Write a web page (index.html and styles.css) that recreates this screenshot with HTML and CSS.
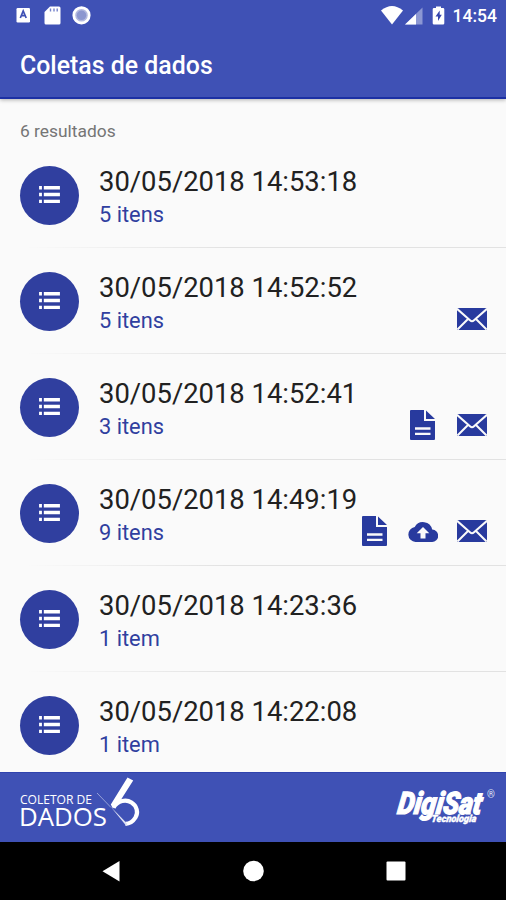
FILE: index.html
```html
<!DOCTYPE html>
<html lang="pt-BR">
<head>
<meta charset="utf-8">
<title>Coletas de dados</title>
<link rel="stylesheet" href="styles.css">
</head>
<body>
<svg class="defs" aria-hidden="true">
  <symbol id="list" viewBox="0 0 22 19"><path d="M0 0h3v3.600H0zM5 0h17v3.600H5zM0 7.200h3v3.600H0zM5 7.200h17v3.600H5zM0 14.400h3V18H0zM5 14.400h17V18H5z"/></symbol>
  <symbol id="mail" viewBox="0 0 30 22"><rect width="30" height="22" rx="1.500"/><path class="cut" d="M0 .8L13 12.300q2 1.800 4 0L30 .8M.5 21.500L11 11M29.500 21.500L19 11"/></symbol>
  <symbol id="file" viewBox="0 0 25 30"><path d="M1 0h13v11h11v18q0 1-1 1H1q-1 0-1-1V1q0-1 1-1zM16 0.500L25 9h-9z"/><path class="cut thick" d="M5 18.500h15.500M5 23.800h15.500"/></symbol>
  <symbol id="cloud" viewBox="0 0 30 20"><path fill-rule="evenodd" d="M24.200 7.600A9.400 9.400 0 0 0 6.700 5.100 7.500 7.500 0 0 0 7.500 20H23.800a6.200 6.200 0 0 0 .4-12.400zM12.500 16.500v-5.300H8.700L15 5l6.300 6.200h-3.800v5.300z"/></symbol>
</svg>
<header class="appbar">
  <div class="status">
    <svg class="status-left" viewBox="0 0 80 20">
      <rect x=".5" y="2" width="13.500" height="14.500" rx="1.200" fill="#fff"/>
      <path d="M4.300 12L7.200 5 10.200 12M5.500 9.600h3.500" fill="none" stroke="#3f51b5" stroke-width="1.700"/>
      <path d="M34 .5h9q1.500 0 1.500 1.500v15q0 1.500-1.500 1.500H30q-1.500 0-1.500-1.500V6z" fill="#fff"/>
      <path d="M34.500 2.500v3M38 2.500v3M41.200 2.500v3" stroke="#7582cb" stroke-width="1.400"/>
      <circle cx="65.500" cy="9.300" r="7.700" fill="#b3badf" stroke="#fff" stroke-width="2.800"/>
      <circle cx="65.500" cy="9.300" r="4.800" fill="#8c97d0"/>
    </svg>
    <div class="status-right">
      <svg class="signals" viewBox="0 0 68 20">
        <path d="M0 4.500Q11-4.500 22 4.500L11 18.500z" fill="#fff"/>
        <path d="M41.500 1.500v17H24z" fill="#8c97d3"/>
        <path d="M35 8v10.500H24z" fill="#fff"/>
        <path d="M55 .5h5v1.500h2q1.300 0 1.300 1.300v14q0 1.300-1.300 1.300h-9q-1.300 0-1.300-1.300v-14q0-1.300 1.300-1.300h2z" fill="#fff"/>
        <path d="M58.700 4.500L54.500 10.500H57v4.500L60.800 8.800h-2.100z" fill="#3545ad"/>
      </svg>
      <span class="clock">14:54</span>
    </div>
  </div>
  <h1>Coletas de dados</h1>
</header>
<main>
  <p class="count">6 resultados</p>
  <ul>
    <li><span class="badge"><svg><use href="#list"/></svg></span><div class="info"><p class="date">30/05/2018 14:53:18</p><p class="items">5 itens</p></div></li>
    <li><span class="badge"><svg><use href="#list"/></svg></span><div class="info"><p class="date">30/05/2018 14:52:52</p><p class="items">5 itens</p></div><div class="actions"><svg class="mail"><use href="#mail"/></svg></div></li>
    <li><span class="badge"><svg><use href="#list"/></svg></span><div class="info"><p class="date">30/05/2018 14:52:41</p><p class="items">3 itens</p></div><div class="actions"><svg class="file"><use href="#file"/></svg><svg class="mail"><use href="#mail"/></svg></div></li>
    <li><span class="badge"><svg><use href="#list"/></svg></span><div class="info"><p class="date">30/05/2018 14:49:19</p><p class="items">9 itens</p></div><div class="actions"><svg class="file"><use href="#file"/></svg><svg class="cloud"><use href="#cloud"/></svg><svg class="mail"><use href="#mail"/></svg></div></li>
    <li><span class="badge"><svg><use href="#list"/></svg></span><div class="info"><p class="date">30/05/2018 14:23:36</p><p class="items">1 item</p></div></li>
    <li><span class="badge"><svg><use href="#list"/></svg></span><div class="info"><p class="date">30/05/2018 14:22:08</p><p class="items">1 item</p></div></li>
  </ul>
</main>
<footer>
  <svg class="coletor" viewBox="0 0 122 50">
    <text x="0" y="25" font-size="12.200" textLength="72" lengthAdjust="spacingAndGlyphs">COLETOR DE</text>
    <text x="-1" y="46.800" font-size="25.500" textLength="88" lengthAdjust="spacingAndGlyphs">DADOS</text>
    <path d="M113.200 1.500L107.500-1.500 90.800 25.500 93 29.500Q97 24.500 99.500 23z" fill="#fff"/>
    <path d="M93.500 28.500C98 21.500 106 20 111.500 23.500 117 27 118.500 33.500 115.500 38.500 113 42.500 109.500 44.800 105.500 44.800" fill="none" stroke="#fff" stroke-width="4.200"/>
    <path d="M77 14L91 28.500" stroke="#9fa8da" stroke-width=".9"/>
    <path d="M90.500 27.500L106 46.500l1.500-1.500z" fill="#dfe2f3"/>
  </svg>
  <svg class="digisat" viewBox="0 0 102 40">
    <g transform="skewX(-8)">
      <text class="brand" x="6.500" y="27" textLength="84" lengthAdjust="spacingAndGlyphs">DigiSat</text>
      <text class="tech" x="42" y="35.500" textLength="45" lengthAdjust="spacingAndGlyphs">Tecnologia</text>
    </g>
    <text class="reg" x="93" y="11">®</text>
  </svg>
</footer>
<nav>
  <svg viewBox="0 0 506 58">
    <path d="M119.500 19v20.500L102.500 29.200z"/>
    <circle cx="253.500" cy="29" r="10.300"/>
    <rect x="386.500" y="19.500" width="19" height="19" rx="1"/>
  </svg>
</nav>
</body>
</html>
```

FILE: styles.css
```css
* { box-sizing: border-box; margin: 0; padding: 0; }
body {
  height: 900px;
  display: flex;
  flex-direction: column;
  overflow: hidden;
  background: #fafafa;
  font-family: Roboto, sans-serif;
}
svg { display: block; flex: none; }
.defs { display: none; }

.appbar {
  flex: none;
  height: 99px;
  background: #3f51b5;
  border-bottom: 2px solid #1c30a4;
  box-shadow: 0 1px 4px rgba(0, 0, 0, .3);
  color: #fff;
}
.status {
  height: 32px;
  display: flex;
  justify-content: space-between;
  padding: 6px 9px 0 16px;
}
.status-left { width: 80px; height: 20px; }
.status-right { display: flex; gap: 4px; }
.signals { width: 68px; height: 20px; }
.clock { font-size: 17.5px; font-weight: 500; line-height: 20px; }
h1 {
  padding-left: 20px;
  font-size: 24.9px;
  font-weight: 500;
  line-height: 32px;
  margin-top: 18px;
}

main { flex: 1; min-height: 0; overflow: hidden; }
.count {
  height: 43px;
  padding: 22px 0 0 20px;
  font-size: 17.4px;
  line-height: 21px;
  color: #757575;
}
ul { list-style: none; }
li {
  height: 106px;
  display: flex;
  padding: 24px 19px 0 20px;
  background: linear-gradient(90deg, transparent 5%, #e2e2e2 45%) left bottom / 100% 1px no-repeat;
}
.badge {
  width: 59px;
  height: 59px;
  display: flex;
  flex: none;
  align-items: center;
  justify-content: center;
  margin-top: -.5px;
  border-radius: 50%;
  background: #303f9f;
}
.badge svg { width: 21px; height: 18px; fill: #fff; }
.info { flex: 1; padding-left: 20px; white-space: nowrap; }
.date { font-size: 27.4px; line-height: 32px; color: #212121; }
.items { margin-top: 4px; font-size: 21.8px; line-height: 26px; color: #303f9f; }
.actions {
  height: 30px;
  display: flex;
  align-items: center;
  margin-top: 32px;
  fill: #283a9e;
}
.mail { width: 30px; height: 22px; }
.file { width: 25px; height: 30px; margin-right: 22px; }
.cloud { width: 30px; height: 20px; margin: 2px 19px 0 -1px; }
.cut { fill: none; stroke: #fafafa; stroke-width: 2; }
.thick { stroke-width: 2.3; }

footer {
  flex: none;
  height: 70px;
  display: flex;
  justify-content: space-between;
  padding: 6px 10px 0 20px;
  background: #3f51b5;
  border-top: 1px solid #3043ae;
}
.coletor { width: 122px; height: 50px; overflow: visible; fill: #fff; font-family: "Open Sans", sans-serif; }
.digisat { width: 102px; height: 40px; margin-top: 8px; overflow: visible; fill: #fff; }
.brand { font: italic 900 31px Roboto, sans-serif; stroke: #fff; stroke-width: 1.2px; }
.tech { font: italic 900 10px Roboto, sans-serif; stroke: #fff; stroke-width: .4px; }
.reg { font-size: 10px; fill: #dfe2f3; }

nav { flex: none; height: 58px; background: #000; }
nav svg { width: 506px; height: 58px; fill: #fff; }
```
